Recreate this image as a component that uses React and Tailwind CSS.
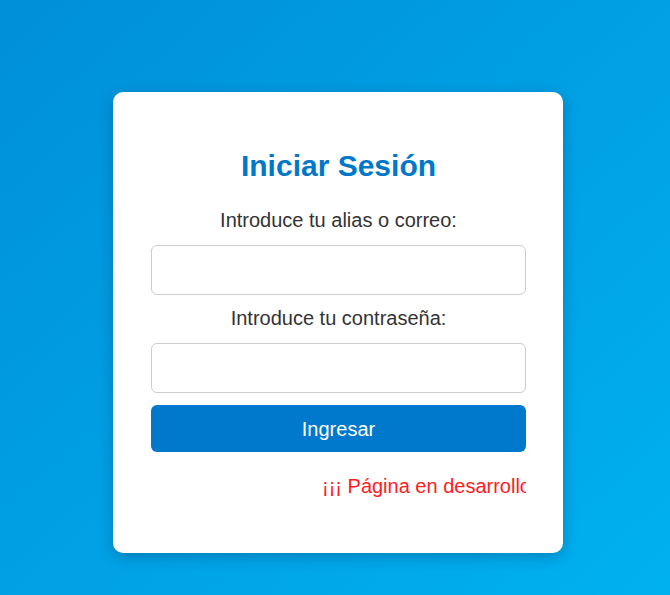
import React from 'react';

export default function App() {
  return (
    <div
      className="min-h-screen w-full bg-linear-to-br from-[#008fd9] to-[#00b1f0] pt-[92px] pl-[113px] pb-10"
      style={{ fontFamily: '"Liberation Sans", Arial, sans-serif' }}
    >
      {/* Login card */}
      <div className="w-[450px] bg-white rounded-[10px] shadow-[0_4px_14px_rgba(0,40,80,0.3)] pt-[56px] pb-[55px] pl-[38px] pr-[37px]">
        <h2 className="text-center text-[30px] leading-[36px] font-bold text-[#0078c9]">Iniciar Sesión</h2>

        <form className="flex flex-col" onSubmit={(e) => e.preventDefault()}>
          <label className="mt-[24px] text-center text-[20px] leading-[24px] text-[#333]">Introduce tu alias o correo:</label>
          <input type="text" className="mt-[13px] h-[50px] w-full rounded-[6px] border border-[#cccccc] bg-white px-3 outline-none" />

          <label className="mt-[11px] text-center text-[20px] leading-[24px] text-[#333]">Introduce tu contraseña:</label>
          <input type="password" className="mt-[13px] h-[50px] w-full rounded-[6px] border border-[#cccccc] bg-white px-3 outline-none" />

          <button type="submit" className="mt-[12px] h-[47px] w-full rounded-[6px] bg-[#0078cb] text-[20px] text-white">
            Ingresar
          </button>
        </form>

        <div className="mt-[22px] overflow-hidden">
          <p className="whitespace-nowrap pl-[171px] text-[20px] leading-[24px] text-[#ff1c1c]">¡¡¡ Página en desarrollo !!!</p>
        </div>
      </div>
    </div>
  );
}
